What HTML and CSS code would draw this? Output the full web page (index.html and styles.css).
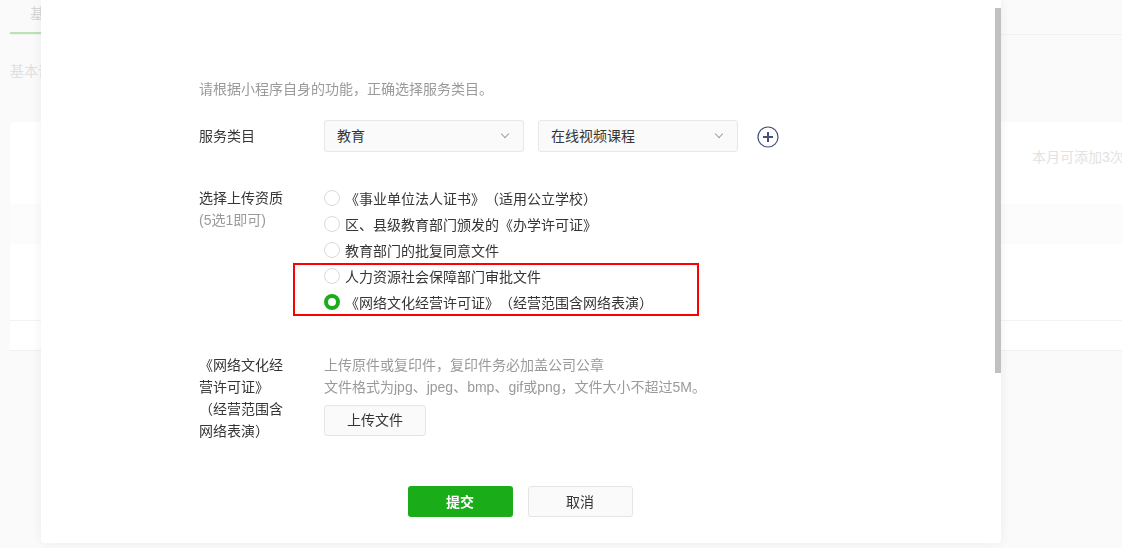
FILE: index.html
```html
<!DOCTYPE html>
<html lang="zh-CN">
<head>
    <meta charset="UTF-8">
    <meta name="viewport" content="width=device-width, initial-scale=1.0">
    <title>服务类目</title>
    <link rel="stylesheet" href="styles.css">
</head>
<body>
    <div class="page">
        <div class="tabs">
            <div class="tab active">基本设置</div>
        </div>
        <div class="page-title">基本设置</div>
        <div class="card">
            <div class="card-row first"><span class="faded">本月可添加3次</span></div>
            <div class="card-row band"></div>
            <div class="card-row tall"></div>
            <div class="card-row short"></div>
        </div>
    </div>

    <div class="modal">
        <div class="modal-body">
            <p class="hint">请根据小程序自身的功能，正确选择服务类目。</p>

            <div class="form-row center">
                <div class="label">服务类目</div>
                <div class="selects">
                    <div class="select">教育<span class="arrow"></span></div>
                    <div class="select">在线视频课程<span class="arrow"></span></div>
                    <svg class="add" width="22" height="22" viewBox="0 0 22 22">
                        <circle cx="11" cy="11" r="10" fill="none" stroke="#45517d" stroke-width="1.2"/>
                        <path d="M11 6v10M6 11h10" stroke="#45517d" stroke-width="2"/>
                    </svg>
                </div>
            </div>

            <div class="form-row qual">
                <div class="label">选择上传资质<br><span class="sub">(5选1即可)</span></div>
                <div class="radio-list">
                    <label class="radio"><span class="dot"></span>《事业单位法人证书》（适用公立学校）</label>
                    <label class="radio"><span class="dot"></span>区、县级教育部门颁发的《办学许可证》</label>
                    <label class="radio"><span class="dot"></span>教育部门的批复同意文件</label>
                    <label class="radio"><span class="dot"></span>人力资源社会保障部门审批文件</label>
                    <label class="radio"><span class="dot checked"></span>《网络文化经营许可证》（经营范围含网络表演）</label>
                    <div class="mark"></div>
                </div>
            </div>

            <div class="form-row upload">
                <div class="label">《网络文化经营许可证》（经营范围含网络表演）</div>
                <div class="upload-box">
                    <p class="tip">上传原件或复印件，复印件务必加盖公司公章</p>
                    <p class="tip">文件格式为jpg、jpeg、bmp、gif或png，文件大小不超过5M。</p>
                    <button class="btn btn-upload">上传文件</button>
                </div>
            </div>

            <div class="actions">
                <button class="btn btn-primary">提交</button>
                <button class="btn btn-default">取消</button>
            </div>
        </div>
        <div class="scrollbar"></div>
    </div>
</body>
</html>
```

FILE: styles.css
```css
body {
    margin: 0;
    background: #fafafa;
    font-family: "Liberation Sans", "Noto Sans CJK SC", sans-serif;
    font-size: 14px;
    color: #353535;
    text-spacing-trim: space-all;
}
p {
    margin: 0;
}

/* faded page behind the dialog */
.page {
    padding: 0 0 0 10px;
    height: 548px;
    overflow: hidden;
}
.tabs {
    display: flex;
    border-bottom: 1px solid #f1f1f1;
    height: 34px;
}
.tab {
    padding: 0 20px;
    line-height: 28px;
    color: #d6d6d6;
    font-size: 15px;
}
.tab.active {
    border-bottom: 2px solid #b9e3b6;
    height: 32px;
}
.page-title {
    margin-top: 25px;
    line-height: 22px;
    color: #e0e0e0;
}
.card {
    margin-top: 40px;
    background: #fff;
    border-radius: 4px;
    width: 1200px;
}
.card-row.first {
    height: 82px;
    padding-left: 1022px;
    line-height: 70px;
}
.faded {
    color: #e2e2e2;
    white-space: nowrap;
}
.card-row.band {
    height: 40px;
    background: #fcfcfc;
}
.card-row.tall {
    height: 76px;
    border-bottom: 1px solid #f3f3f3;
}
.card-row.short {
    height: 29px;
    border-bottom: 1px solid #f1f1f1;
}

/* dialog */
.modal {
    position: fixed;
    left: 41px;
    top: 0;
    width: 960px;
    height: 543px;
    background: #fff;
    border-radius: 0 0 4px 4px;
    box-shadow: 0 0 12px rgba(0, 0, 0, 0.06);
}
.modal-body {
    padding: 78px 0 0 158px;
}
.hint {
    line-height: 22px;
    color: #9a9a9a;
    margin-bottom: 20px;
}
.form-row {
    display: flex;
}
.form-row.center {
    align-items: center;
}
.label {
    width: 88px;
    margin-right: 37px;
    line-height: 22px;
}
.sub {
    color: #9a9a9a;
}
.selects {
    display: flex;
    align-items: center;
}
.select {
    position: relative;
    width: 174px;
    height: 30px;
    line-height: 30px;
    padding: 0 12px;
    margin-right: 14px;
    border: 1px solid #e7e7eb;
    border-radius: 3px;
    background: #fafafa;
}
.arrow {
    position: absolute;
    right: 15px;
    top: 10px;
    width: 5px;
    height: 5px;
    border-right: 1px solid #a0a0a0;
    border-bottom: 1px solid #a0a0a0;
    transform: rotate(45deg);
}
.add {
    margin-left: 5px;
    margin-top: 1px;
}

.form-row.qual {
    margin-top: 33px;
}
.qual .label {
    padding-top: 2px;
}
.radio-list {
    position: relative;
}
.radio {
    display: flex;
    align-items: center;
    height: 26px;
}
.dot {
    box-sizing: border-box;
    width: 16px;
    height: 16px;
    border: 1px solid #d9d9d9;
    border-radius: 50%;
    margin-right: 5px;
}
.dot.checked {
    border: 4px solid #1aad19;
}
.mark {
    position: absolute;
    left: -31px;
    top: 78px;
    width: 402px;
    height: 49px;
    border: 2px solid #f00;
}

.form-row.upload {
    margin-top: 39px;
}
.tip {
    line-height: 22px;
    color: #9a9a9a;
}
.btn {
    font-family: inherit;
    font-size: 14px;
    line-height: 20px;
    border-radius: 3px;
    cursor: pointer;
}
.btn-upload {
    margin-top: 7px;
    width: 102px;
    height: 31px;
    padding: 0 0 2px;
    border: 1px solid #e5e5e5;
    background: #fafafa;
    color: #353535;
}
.actions {
    display: flex;
    justify-content: center;
    gap: 15px;
    margin: 44px 0 0 -160px;
}
.btn-primary {
    width: 105px;
    height: 31px;
    border: none;
    background: #1aad19;
    color: #fff;
    font-weight: bold;
}
.btn-default {
    width: 105px;
    height: 31px;
    border: 1px solid #e5e5e5;
    background: #fafafa;
    color: #353535;
}
.scrollbar {
    position: absolute;
    right: 0;
    top: 8px;
    width: 6px;
    height: 365px;
    background: #c1c1c1;
}
```
